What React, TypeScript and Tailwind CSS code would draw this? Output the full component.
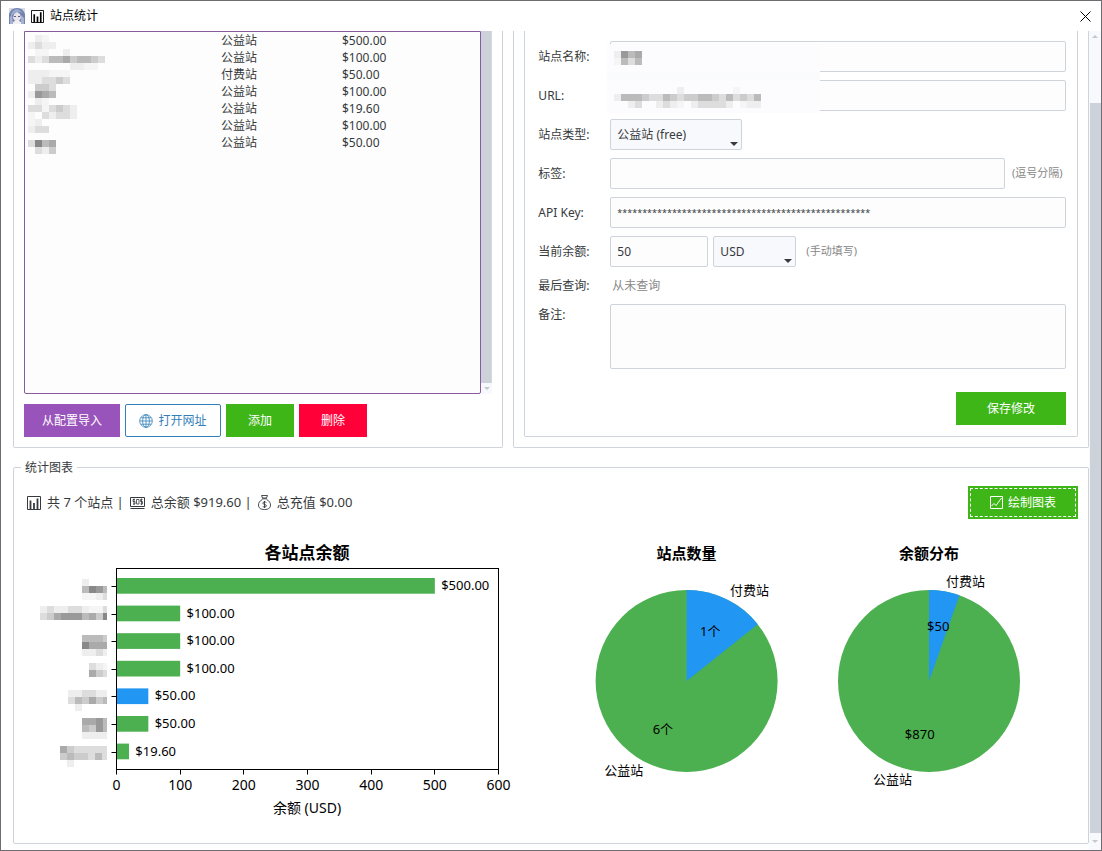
import { useState } from 'react';
import type { ReactNode } from 'react';

interface Site {
  id: number;
  type: string;
  balance: number;
}

interface Bar {
  balance: number;
  color: string;
  x: number;
  y: number;
  mask: string[];
}

const GREEN = '#4caf50';
const BLUE = '#2196f3';

const sites: Site[] = [
  { id: 1, type: '公益站', balance: 500 },
  { id: 2, type: '公益站', balance: 100 },
  { id: 3, type: '付费站', balance: 50 },
  { id: 4, type: '公益站', balance: 100 },
  { id: 5, type: '公益站', balance: 19.6 },
  { id: 6, type: '公益站', balance: 100 },
  { id: 7, type: '公益站', balance: 50 },
];

// Each character is one 7px cell, a hex gray level or '.' for empty
const siteNamesMask = [
  '.ef',
  'edee',
  '.ff..e',
  'dedbbacbbcd',
  '......eeff',
  'eeefff',
  'eeddcd',
  '.ccd',
  'e9ab',
  '.ef',
  'ddfdcde',
  'f.dedde',
  'fe',
  'edd',
  '....',
  'd8ba',
  '.dec',
];

const nameMask = ['e9ba', 'fbdb'];
const urlMask = ['.........e.......f', 'ebbbcddbcdccbbcdbdcdb', '..ed..edef.edddde.fee'];

const bars: Bar[] = [
  { balance: 500, color: GREEN, x: 58, y: 50, mask: ['e...', 'b89b', 'ffed'] },
  { balance: 100, color: GREEN, x: 16, y: 77, mask: ['edeeddeffd', 'dca999bac8a'] },
  { balance: 100, color: GREEN, x: 58, y: 106, mask: ['bbbc', '8aaa', 'eede'] },
  { balance: 100, color: GREEN, x: 65, y: 134, mask: ['def', 'acd'] },
  { balance: 50, color: BLUE, x: 44, y: 161, mask: ['eeddee', 'dbcacb', '.e'] },
  { balance: 50, color: GREEN, x: 58, y: 189, mask: ['aa9b', 'bc9b', 'eeee'] },
  { balance: 19.6, color: GREEN, x: 36, y: 217, mask: ['acddddd', 'cbccdbd', '.e'] },
];

const formatMoney = (value: number) => `$${value.toFixed(2)}`;

const MaskCells = ({ rows }: { rows: string[] }) => (
  <>
    {rows.flatMap((row, y) =>
      row.split('').map((level, x) =>
        level === '.' ? null : (
          <rect key={`${x}-${y}`} x={x * 7} y={y * 7} width="7" height="7" fill={level === 'f' ? '#f5f5f6' : `#${level.repeat(3)}`} />
        )
      )
    )}
  </>
);

const AvatarIcon = () => (
  <svg width="16" height="16" viewBox="0 0 16 16" aria-hidden="true">
    <rect width="16" height="16" fill="#d9dbe6" />
    <path d="M0 16V6Q2 0 8 0t8 6v10z" fill="#7182ad" />
    <path d="M2 6Q4 1 9 1l5 4-4-1-4 1-4 3z" fill="#9aa9cf" />
    <path d="M5 6l3-2 3 2 1 4-2 3H6l-2-3z" fill="#e9e3ea" />
    <path d="M1 9l2-2 1 9H1zM12 7l3 3v6h-3z" fill="#a9b2d4" />
    <path d="M5 8h2v1H5zM9 8h2v1H9z" fill="#55608c" />
    <path d="M4 14l4-2 4 2v2H4z" fill="#f1f1f5" />
  </svg>
);

const ChartIcon = ({ className }: { className: string }) => (
  <svg className={className} viewBox="0 0 14 14" fill="none" stroke="currentColor" aria-hidden="true">
    <path d="M.5.5h13v13H.5z" />
    <path d="M3.5 4.5v9M7 7v6.5M10.5 2.5v11" strokeWidth="1.8" />
  </svg>
);

const GlobeIcon = () => (
  <svg className="h-[14px] w-[14px]" viewBox="0 0 14 14" fill="none" stroke="currentColor" strokeWidth=".8" aria-hidden="true">
    <circle cx="7" cy="7" r="6.3" />
    <ellipse cx="7" cy="7" rx="3.4" ry="6.3" />
    <path d="M7 .7v12.6M.7 7h12.6M1.8 3.8h10.4M1.8 10.2h10.4" />
  </svg>
);

const BanknoteIcon = () => (
  <svg className="h-[12px] w-[15px]" viewBox="0 0 15 12" fill="none" stroke="currentColor" aria-hidden="true">
    <path d="M.5.5h14v9H.5zM.5 11.5h14" />
    <path d="M5 2.5H3v2h2v2.5H3M9 2.5H6.500v4.500H9zM10.500 7h2v-2.500h-2v-2h2M4 1.500v6.500M11.500 1.500v6.500" strokeWidth=".8" />
  </svg>
);

const MoneyBagIcon = () => (
  <svg className="h-[15px] w-[13px]" viewBox="0 0 13 15" fill="none" stroke="currentColor" strokeWidth=".9" aria-hidden="true">
    <path d="M3.500.5h6L8.500 3h-4zM4 3.800h5M4.300 4.500C1.500 6 .5 8 .5 10c0 3 2 4.500 6 4.500s6-1.500 6-4.500c0-2-1-4-3.800-5.500" />
    <path d="M8.300 7.500C7.500 6.700 4.800 6.700 4.800 8.200c0 1.600 3.600.9 3.600 2.600 0 1.600-2.800 1.500-3.700.6M6.500 6v7" />
  </svg>
);

const TrendIcon = () => (
  <svg className="h-[13px] w-[13px]" viewBox="0 0 13 13" fill="none" stroke="currentColor" aria-hidden="true">
    <path d="M.5.5h12v12H.5z" />
    <path d="M1.500 10L4 7.500l2 2L11.500 2" />
  </svg>
);

const Caret = ({ className }: { className: string }) => (
  <svg className={className} viewBox="0 0 8 4" fill="currentColor" aria-hidden="true">
    <path d="M0 0h8L4 4z" />
  </svg>
);

interface DropDownProps {
  id: string;
  label?: string;
  className: string;
  children: ReactNode;
}

const DropDown = ({ id, label, className, children }: DropDownProps) => (
  <div className={`relative ${className}`}>
    <select id={id} aria-label={label} className="h-[31px] w-full appearance-none rounded-[2px] border border-[#ced4da] bg-[#f8f9fc] px-[6px] outline-none">
      {children}
    </select>
    <Caret className="pointer-events-none absolute right-[4px] bottom-[4px] h-[4px] w-[8px]" />
  </div>
);

const inputClass = 'h-[31px] rounded-[2px] border border-[#ced4da] bg-[#fdfdfe] px-[6px] outline-none';

const SiteListPanel = () => (
  <section className="flex flex-col rounded-b-[2px] border border-t-0 border-[#ced4da] px-[10px] pb-[10px]">
    <div className="flex flex-1">
      <div className="flex-1 rounded-b-[2px] border border-[#8a5a9e] bg-[#fdfdfd] pl-[3px]">
        <table className="w-full table-fixed text-left">
          <tbody>
            {sites.map((site, index) => (
              <tr key={site.id} className="h-[17px] leading-[17px]">
                {index === 0 && (
                  <td rowSpan={sites.length} className="w-[193px] p-0 align-top">
                    <svg className="mt-[3px] block overflow-visible" width="84" height="112" role="img" aria-label="站点名称">
                      <MaskCells rows={siteNamesMask} />
                    </svg>
                  </td>
                )}
                <td className="w-[121px] p-0">{site.type}</td>
                <td className="p-0">{formatMoney(site.balance)}</td>
              </tr>
            ))}
          </tbody>
        </table>
      </div>
      <div className="flex w-[11px] flex-col items-center bg-[#f8f9fc]">
        <div className="w-full flex-1 border-r border-[#ccdcd6] bg-[#cdd2da]" />
        <div className="flex h-[11px] items-center text-[#c3c8d0]">
          <Caret className="h-[3px] w-[6px]" />
        </div>
      </div>
    </div>
    <div className="mt-[10px] flex gap-[5px] text-white">
      <button type="button" className="h-[33px] w-24 bg-[#9954bb]">从配置导入</button>
      <button type="button" className="flex h-[33px] w-24 items-center justify-center gap-[5px] rounded-[2px] border border-[#3480b8] text-[#3480b8]">
        <GlobeIcon />
        打开网址
      </button>
      <button type="button" className="h-[33px] w-[68px] bg-[#3fb618]">添加</button>
      <button type="button" className="h-[33px] w-[68px] bg-[#ff0039]">删除</button>
    </div>
  </section>
);

const SiteForm = () => {
  const [balance, setBalance] = useState('50');
  const [tags, setTags] = useState('');
  const [notes, setNotes] = useState('');

  return (
    <section className="rounded-b-[2px] border border-t-0 border-[#ced4da] px-[10px] pb-[10px]">
      <form className="rounded-b-[2px] border border-t-0 border-[#ced4da] pt-[10px] pr-[11px] pb-[11px] pl-[13px]">
        <div className="relative grid grid-cols-[72px_minmax(0,1fr)] items-center gap-y-2">
          <label htmlFor="name">站点名称:</label>
          <input id="name" className={inputClass} />
          <label htmlFor="url">URL:</label>
          <input id="url" className={inputClass} />
          {/* Masked name and URL */}
          <svg className="pointer-events-none absolute top-[3px] left-[69px]" width="213" height="69" aria-hidden="true">
            <rect width="213" height="69" fill="#fcfcfe" />
            <rect y="29" width="213" height="8" fill="#fafbfd" />
            <g transform="translate(7 7)">
              <MaskCells rows={nameMask} />
            </g>
            <g transform="translate(7 43)">
              <MaskCells rows={urlMask} />
            </g>
          </svg>

          <label htmlFor="type">站点类型:</label>
          <DropDown id="type" className="w-[132px]">
            <option>公益站 (free)</option>
            <option>付费站 (paid)</option>
          </DropDown>

          <label htmlFor="tags">标签:</label>
          <div className="flex items-center gap-[7px]">
            <input id="tags" value={tags} onChange={(e) => setTags(e.target.value)} className={`min-w-0 flex-1 ${inputClass}`} />
            <span className="w-[54px] text-[11px] whitespace-nowrap text-[#888888]">(逗号分隔)</span>
          </div>

          <label htmlFor="apiKey">API Key:</label>
          <input id="apiKey" defaultValue={'*'.repeat(51)} className={`text-[9px] ${inputClass}`} />

          <label htmlFor="balance">当前余额:</label>
          <div className="flex items-center">
            <input id="balance" value={balance} onChange={(e) => setBalance(e.target.value)} className={`w-[98px] ${inputClass}`} />
            <DropDown id="currency" label="币种" className="ml-[5px] w-[83px]">
              <option>USD</option>
              <option>CNY</option>
            </DropDown>
            <span className="ml-[10px] text-[11px] text-[#888888]">(手动填写)</span>
          </div>

          <span>最后查询:</span>
          <span className="h-[21px] pl-[2px] leading-[21px] text-[#888888]">从未查询</span>

          <label htmlFor="notes" className="self-start leading-[21px]">备注:</label>
          <textarea
            id="notes"
            value={notes}
            onChange={(e) => setNotes(e.target.value)}
            className="block h-[65px] resize-none rounded-[2px] border border-[#ced4da] bg-[#fdfdfe] p-[6px] outline-none"
          />
        </div>
        <div className="mt-[23px] flex justify-end">
          <button type="button" className="h-[33px] w-[110px] bg-[#3fb618] text-white">保存修改</button>
        </div>
      </form>
    </section>
  );
};

interface PieProps {
  cx: number;
  title: string;
  share: number;
  paidValue: string;
  freeValue: string;
}

const Pie = ({ cx, title, share, paidValue, freeValue }: PieProps) => {
  const cy = 152;
  const r = 91;
  const angle = share * 2 * Math.PI;
  const mid = angle / 2;
  const at = (radius: number, a: number) => ({ x: cx + radius * Math.sin(a), y: cy - radius * Math.cos(a) });
  const end = at(r, angle);
  const paidText = at(r * 0.6, mid);
  const freeText = at(r * 0.6, mid + Math.PI);
  const paidLabel = at(r * 1.1, mid);
  const freeLabel = at(r * 1.1, mid + Math.PI);

  return (
    <g fontSize="13">
      <text x={cx} y="30" textAnchor="middle" fontSize="15" fontWeight="bold">{title}</text>
      <circle cx={cx} cy={cy} r={r} fill={GREEN} />
      <path d={`M${cx} ${cy}V${cy - r}A${r} ${r} 0 0 1 ${end.x} ${end.y}z`} fill={BLUE} />
      <text x={paidText.x} y={paidText.y + 4} textAnchor="middle">{paidValue}</text>
      <text x={freeText.x} y={freeText.y + 4} textAnchor="middle">{freeValue}</text>
      <text x={paidLabel.x} y={paidLabel.y + 4}>付费站</text>
      <text x={freeLabel.x} y={freeLabel.y + 4} textAnchor="end">公益站</text>
    </g>
  );
};

const Charts = () => {
  const left = 92.5;
  const top = 39.5;
  const bottom = 240.5;
  const scale = 382 / 600;

  return (
    <svg className="mt-[10px] block w-full" viewBox="0 0 1054 304" role="img" aria-label="各站点余额、站点数量与余额分布">
      <text x="283" y="30" textAnchor="middle" fontSize="17" fontWeight="bold">各站点余额</text>
      {bars.map((bar, index) => {
        const y = 57 + index * 27.6;
        return (
          <g key={index}>
            <svg x={bar.x} y={bar.y} width={83 - bar.x} height="21">
              <MaskCells rows={bar.mask} />
            </svg>
            <path d={`M${left - 5} ${Math.round(y) + 0.5}h5`} stroke="#000" />
            <rect x={left} y={y - 8} width={bar.balance * scale} height="15.7" fill={bar.color} />
            <text x={left + (bar.balance + 10) * scale} y={y + 4} fontSize="13">{formatMoney(bar.balance)}</text>
          </g>
        );
      })}
      <rect x={left} y={top} width="382" height={bottom - top} fill="none" stroke="#000" />
      {[0, 100, 200, 300, 400, 500, 600].map((tick) => (
        <g key={tick}>
          <path d={`M${Math.floor(left + tick * scale) + 0.5} ${bottom}v5`} stroke="#000" />
          <text x={left + tick * scale} y="261" textAnchor="middle" fontSize="14">{tick}</text>
        </g>
      ))}
      <text x="283" y="284" textAnchor="middle" fontSize="14">余额 (USD)</text>
      <Pie cx={662.6} title="站点数量" share={1 / 7} paidValue="1个" freeValue="6个" />
      <Pie cx={905} title="余额分布" share={50 / 919.6} paidValue="$50" freeValue="$870" />
    </svg>
  );
};

const StatsPanel = () => (
  <fieldset className="mt-[10px] min-w-0 rounded-[2px] border border-[#ced4da] px-[7px] pt-[9px] pb-[10px]">
    <legend className="px-[4px] leading-[19px]">统计图表</legend>
    <div className="px-[3px]">
      <div className="flex items-center justify-between">
        <p className="flex items-center gap-[6px] pl-[3px] text-[13px]">
          <ChartIcon className="h-[14px] w-[14px]" />
          <span>共 7 个站点 |</span>
          <BanknoteIcon />
          <span>总余额 $919.60 |</span>
          <MoneyBagIcon />
          <span>总充值 $0.00</span>
        </p>
        <button type="button" className="h-[33px] w-[110px] bg-[#3fb618] p-[2px] text-white">
          <span className="flex h-full items-center justify-center gap-[5px] border border-dashed border-white">
            <TrendIcon />
            绘制图表
          </span>
        </button>
      </div>
      <Charts />
    </div>
  </fieldset>
);

export default function App() {
  return (
    <div className="flex min-h-screen flex-col border border-[#6e6c70] bg-white font-['Noto_Sans','Noto_Sans_CJK_SC',sans-serif] text-[12px] text-[#373a3c]">
      <header className="flex h-[30px] shrink-0 items-center pr-[10px] pl-2 text-black">
        <AvatarIcon />
        <ChartIcon className="mr-[6px] ml-[6px] h-[13px] w-[13px]" />
        <h1 className="flex-1">站点统计</h1>
        <button type="button" aria-label="关闭">
          <svg width="11" height="11" viewBox="0 0 11 11" stroke="currentColor" aria-hidden="true">
            <path d="M.5.5l10 10M10.500.5l-10 10" />
          </svg>
        </button>
      </header>
      <div className="flex flex-1">
        <main className="min-w-0 flex-1 pb-[6px] pl-3">
          <div className="grid grid-cols-[46fr_54fr] gap-[10px]">
            <SiteListPanel />
            <SiteForm />
          </div>
          <StatsPanel />
        </main>
        <div className="flex w-3 flex-col bg-[#f8f9fc] text-[#c3c8d0]">
          <div className="flex h-[72px] justify-center pt-[4px]">
            <Caret className="h-[3px] w-[6px] rotate-180" />
          </div>
          <div className="ml-px flex-1 bg-[#cdd2da]" />
          <div className="flex h-[17px] items-center justify-center">
            <Caret className="h-[3px] w-[6px]" />
          </div>
        </div>
      </div>
    </div>
  );
}
